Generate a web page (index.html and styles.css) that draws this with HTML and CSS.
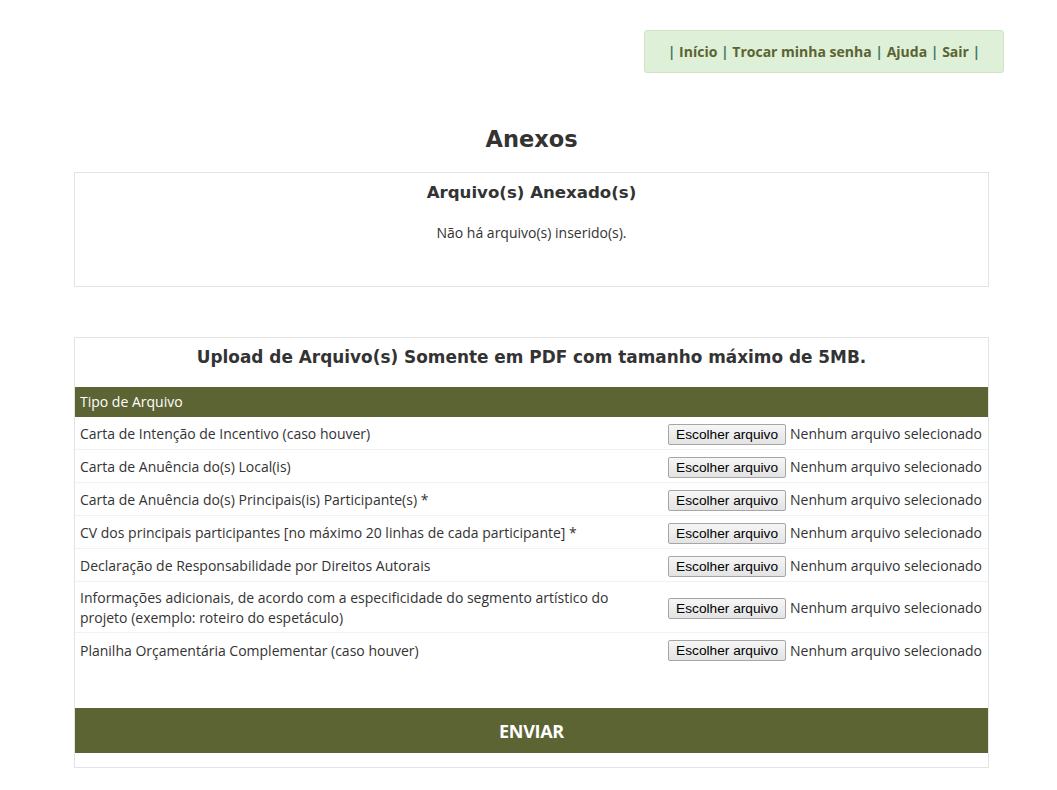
FILE: index.html
```html
<!DOCTYPE html>
<html lang="pt-BR">
<head>
<meta charset="utf-8">
<title>Anexos</title>
<link rel="stylesheet" href="styles.css">
</head>
<body>
<div class="page">
  <div class="topbar">
    <nav class="menu">| <a href="#">Início</a> | <a href="#">Trocar minha senha</a> | <a href="#">Ajuda</a> | <a href="#">Sair</a> |</nav>
  </div>

  <h1 class="title">Anexos</h1>

  <section class="panel attached">
    <h2 class="panel-title">Arquivo(s) Anexado(s)</h2>
    <p class="empty">Não há arquivo(s) inserido(s).</p>
  </section>

  <section class="panel upload">
    <h2 class="panel-title upload-title">Upload de Arquivo(s) Somente em PDF com tamanho máximo de 5MB.</h2>
    <div class="table">
      <div class="thead">Tipo de Arquivo</div>
      <div class="row"><span class="label">Carta de Intenção de Incentivo (caso houver)</span><span class="file"><span class="btn">Escolher arquivo</span><span class="none">Nenhum arquivo selecionado</span></span></div>
      <div class="row"><span class="label">Carta de Anuência do(s) Local(is)</span><span class="file"><span class="btn">Escolher arquivo</span><span class="none">Nenhum arquivo selecionado</span></span></div>
      <div class="row"><span class="label">Carta de Anuência do(s) Principais(is) Participante(s) *</span><span class="file"><span class="btn">Escolher arquivo</span><span class="none">Nenhum arquivo selecionado</span></span></div>
      <div class="row"><span class="label">CV dos principais participantes [no máximo 20 linhas de cada participante] *</span><span class="file"><span class="btn">Escolher arquivo</span><span class="none">Nenhum arquivo selecionado</span></span></div>
      <div class="row"><span class="label">Declaração de Responsabilidade por Direitos Autorais</span><span class="file"><span class="btn">Escolher arquivo</span><span class="none">Nenhum arquivo selecionado</span></span></div>
      <div class="row"><span class="label">Informações adicionais, de acordo com a especificidade do segmento artístico do projeto (exemplo: roteiro do espetáculo)</span><span class="file"><span class="btn">Escolher arquivo</span><span class="none">Nenhum arquivo selecionado</span></span></div>
      <div class="row last"><span class="label">Planilha Orçamentária Complementar (caso houver)</span><span class="file"><span class="btn">Escolher arquivo</span><span class="none">Nenhum arquivo selecionado</span></span></div>
    </div>
    <button class="submit" type="button">ENVIAR</button>
  </section>
</div>
</body>
</html>
```
FILE: styles.css
```css
* { box-sizing: border-box; }
html, body { margin: 0; padding: 0; background: #fff; }
body {
  font-family: "Open Sans", "Liberation Sans", sans-serif;
  font-size: 14px;
  color: #333;
}
.page {
  width: 945px;
  margin-left: 59px;
  padding: 30px 15px 20px;
}
.topbar {
  display: flex;
  justify-content: flex-end;
  margin-right: -15px;
}
.menu {
  display: block;
  width: 360px;
  height: 43px;
  background: #dff0d8;
  border: 1px solid #d0e4c4;
  border-radius: 3px;
  text-align: center;
  line-height: 41px;
  font-weight: 700;
  font-size: 14px;
  color: #3f7a6a;
}
.menu a { color: #5b6333; text-decoration: none; }
.title {
  margin: 52px 0 0;
  height: 47px;
  text-align: center;
  font-family: "DejaVu Sans", sans-serif;
  font-weight: 700;
  font-size: 22.5px;
  color: #333;
  line-height: 28px;
}
.panel {
  border: 1px solid #e3e3e3;
  background: #fff;
}
.attached {
  height: 115px;
  padding-top: 8px;
}
.panel-title {
  margin: 0;
  text-align: center;
  font-family: "DejaVu Sans", sans-serif;
  font-weight: 700;
  font-size: 16.6px;
  line-height: 24px;
  color: #333;
}
.empty {
  margin: 18px 0 0;
  text-align: center;
  line-height: 20px;
}
.upload {
  margin-top: 50px;
  height: 431px;
}
.upload .upload-title {
  font-size: 16.9px;
  padding-top: 7px;
  height: 49px;
}
.thead {
  background: #5c6434;
  color: #fff;
  height: 30px;
  line-height: 30px;
  padding: 0 5px;
}
.row {
  display: flex;
  align-items: center;
  justify-content: space-between;
  min-height: 33px;
  padding: 6px 6px 4px 5px;
  border-bottom: 1px solid #f2f2f2;
  line-height: 20px;
}
.row.last { border-bottom: none; }
.label { max-width: 560px; }
.file {
  display: flex;
  align-items: center;
  gap: 4px;
  white-space: nowrap;
  flex: none;
}
.btn {
  font-family: "Liberation Sans", Arial, sans-serif;
  font-size: 13.7px;
  color: #000;
  background: linear-gradient(#f6f6f6, #e3e3e3);
  border: 1px solid #a6a6a6;
  border-radius: 2px;
  height: 21px;
  line-height: 19px;
  padding: 0 7px;
}
.none { color: #333; }
.submit {
  display: block;
  width: 100%;
  margin-top: 42px;
  height: 45px;
  border: none;
  background: #5c6434;
  color: #fff;
  font-family: "Open Sans", sans-serif;
  font-weight: 700;
  font-size: 18px;
  letter-spacing: -0.3px;
}
```
